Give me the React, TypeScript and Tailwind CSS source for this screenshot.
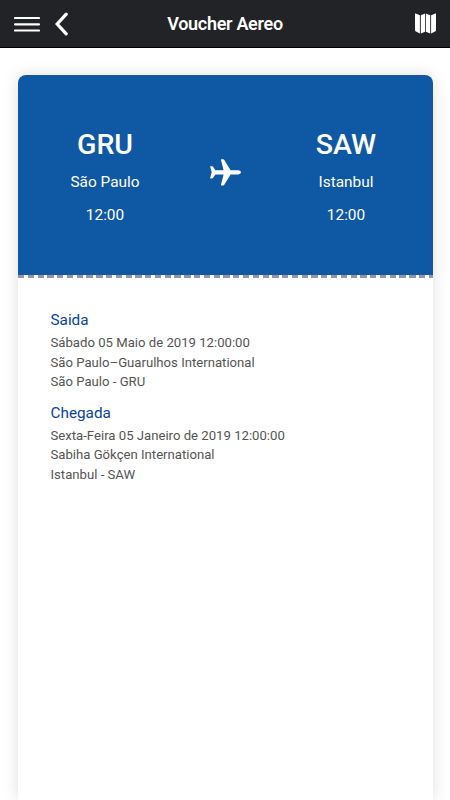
interface Airport {
  code: string;
  city: string;
  time: string;
}

interface FlightDetail {
  title: string;
  date: string;
  airport: string;
  location: string;
}

const origin: Airport = { code: "GRU", city: "São Paulo", time: "12:00" };
const destination: Airport = { code: "SAW", city: "Istanbul", time: "12:00" };

const details: FlightDetail[] = [
  {
    title: "Saida",
    date: "Sábado 05 Maio de 2019 12:00:00",
    airport: "São Paulo–Guarulhos International",
    location: "São Paulo - GRU",
  },
  {
    title: "Chegada",
    date: "Sexta-Feira 05 Janeiro de 2019 12:00:00",
    airport: "Sabiha Gökçen International",
    location: "Istanbul - SAW",
  },
];

function MenuIcon() {
  return (
    <svg width="26" height="17" viewBox="0 0 26 17" stroke="#fff" strokeWidth="2.2" strokeLinecap="round">
      <path d="M1 3h24M1 9.3h24M1 15.5h24" />
    </svg>
  );
}

function BackIcon() {
  return (
    <svg width="14" height="24" viewBox="0 0 14 24" fill="none" stroke="#fff" strokeWidth="3.3" strokeLinecap="round">
      <path d="M11.2 2.2 2.2 12l9 9.8" />
    </svg>
  );
}

function MapIcon() {
  return (
    <svg width="21" height="21" viewBox="0 0 21 21" fill="#fff">
      <path d="M0 .8Q0 .2.7.5L4.9 2.2V20.6L.5 18.2Q0 17.9 0 17.3zM5.8 2.2 10.1.6V18.8L5.8 20.6zM10.9.6 15.2 2.2V20.6L10.9 18.8zM16.1 2.2 20.3.5Q21 .2 21 .8V17.3Q21 17.9 20.5 18.2L16.1 20.6z" />
    </svg>
  );
}

function PlaneIcon() {
  return (
    <svg width="31" height="27" viewBox="0 0 31 27" fill="#fff">
      <path d="M11.4.3h1.8q.7 0 1.1.7L20.6 11.2H28.5q2.5.6 2.5 2.1t-2.5 2.1H20.6L14.3 25.8q-.4.7-1.1.7h-1.8q-.6 0-.4-.7L13.6 15.4H5.4L2.9 19q-.3.4-.8.4H.6q-.6 0-.4-.6L1.7 13.3.2 7.8Q0 7.2.6 7.2H2.1q.5 0 .8.4L5.4 11.2H13.6L11 1Q10.8.3 11.4.3z" />
    </svg>
  );
}

function AirportColumn({ code, city, time }: Airport) {
  return (
    <div className="w-[174px] pt-[52px] text-center text-white">
      <h2 className="text-[28.5px] leading-[36px] font-medium">{code}</h2>
      <p className="mt-[9px] text-[15.4px] leading-[20px]">{city}</p>
      <p className="mt-[13px] text-[15.4px] leading-[20px]">{time}</p>
    </div>
  );
}

export default function App() {
  return (
    <div className="flex h-screen flex-col overflow-hidden bg-white font-[Roboto,sans-serif]">
      <header className="grid h-12 shrink-0 grid-cols-[1fr_auto_1fr] items-center border-b border-black bg-[#222326] pr-[14px] pl-[14px]">
        <div className="flex items-center gap-[15px]">
          <MenuIcon />
          <BackIcon />
        </div>
        <h1 className="text-[18px] font-semibold tracking-[-0.3px] text-white">Voucher Aereo</h1>
        <div className="flex justify-end">
          <MapIcon />
        </div>
      </header>

      <main className="flex min-h-0 flex-1 pt-[27px] pr-[17px] pl-[18px]">
        <article className="flex-1 rounded-t-[8px] bg-white shadow-[0_0_16px_rgba(0,0,0,0.13)]">
          <div className="flex h-[200px] justify-between rounded-t-[8px] bg-[#0f58a3]">
            <AirportColumn {...origin} />
            <div className="flex h-[194px] items-center">
              <PlaneIcon />
            </div>
            <AirportColumn {...destination} />
          </div>
          {/* ticket perforation */}
          <div className="h-[3px] bg-[repeating-linear-gradient(90deg,#9295a8_0px,#9295a8_6.3px,#fff_6.3px,#fff_9.78px)]" />

          <div className="pr-[32px] pl-[32.5px] pt-[32px]">
            {details.map((item) => (
              <section key={item.title} className="mb-[11px] text-[13.15px] leading-[19.6px] text-[#555]">
                <h3 className="mb-[3px] text-[15.3px] leading-[20px] text-[#0942a0]">{item.title}</h3>
                <p>{item.date}</p>
                <p>{item.airport}</p>
                <p>{item.location}</p>
              </section>
            ))}
          </div>
        </article>
      </main>
    </div>
  );
}
